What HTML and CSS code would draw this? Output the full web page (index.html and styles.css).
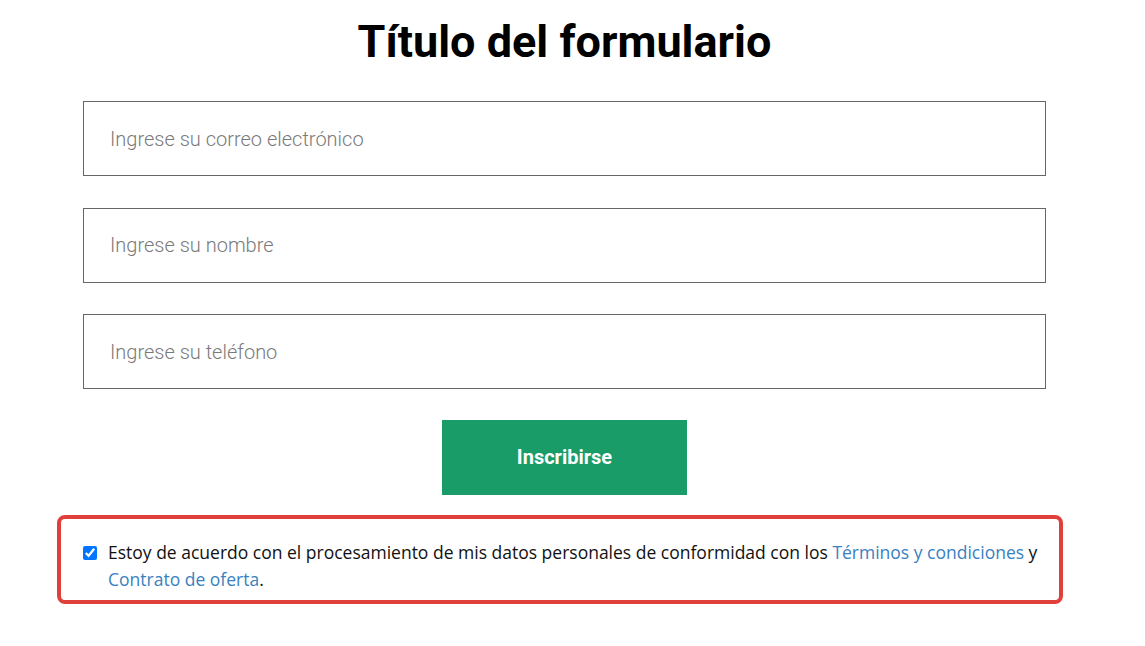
FILE: index.html
```html
<!DOCTYPE html>
<html lang="es">
<head>
    <meta charset="UTF-8">
    <meta name="viewport" content="width=device-width, initial-scale=1.0">
    <title>Formulario</title>
    <link rel="stylesheet" href="styles.css">
</head>
<body>
    <div class="page">
        <h1 class="form-title">Título del formulario</h1>

        <form class="signup-form">
            <input type="email" class="field" placeholder="Ingrese su correo electrónico">
            <input type="text" class="field" placeholder="Ingrese su nombre">
            <input type="tel" class="field" placeholder="Ingrese su teléfono">
            <button type="submit" class="submit-btn">Inscribirse</button>
        </form>

        <label class="consent">
            <input type="checkbox" class="consent-check" checked>
            <span class="consent-text">Estoy de acuerdo con el procesamiento de mis datos personales de conformidad con los <a href="#">Términos y condiciones</a> y <a href="#">Contrato de oferta</a>.</span>
        </label>
    </div>
</body>
</html>
```

FILE: styles.css
```css
* {
    box-sizing: border-box;
    margin: 0;
    padding: 0;
}

body {
    background: #fff;
    font-family: Roboto, "Liberation Sans", sans-serif;
    padding-right: 16px;
}

.page {
    width: 1006px;
    margin: 0 auto;
    padding-top: 14px;
    display: flex;
    flex-direction: column;
    align-items: center;
}

.form-title {
    font-size: 45px;
    font-weight: 700;
    color: #000;
    line-height: 56px;
    margin-bottom: 31px;
}

.signup-form {
    width: 963px;
    display: flex;
    flex-direction: column;
    align-items: center;
    gap: 31.5px;
}

.field {
    width: 100%;
    height: 75px;
    border: 1px solid #666;
    padding: 0 26px;
    font-family: Roboto, sans-serif;
    font-weight: 300;
    font-size: 20px;
    color: #333;
    outline: none;
}

.field::placeholder {
    color: #7a7a7a;
}

.submit-btn {
    width: 245px;
    height: 75px;
    margin-top: -1px;
    background: #1a9c68;
    color: #fff;
    border: none;
    font-family: Roboto, sans-serif;
    font-weight: 700;
    font-size: 20px;
    cursor: pointer;
}

.consent {
    width: 1006px;
    margin-top: 20px;
    margin-left: -9px;
    border: 4px solid #e0403a;
    border-radius: 8px;
    padding: 20px 19px 7px 22px;
    display: flex;
    align-items: flex-start;
    gap: 11px;
    font-family: "Open Sans", sans-serif;
    font-size: 17.5px;
    line-height: 27px;
    color: #111;
}

.consent-check {
    width: 14px;
    height: 14px;
    margin-top: 7px;
    flex-shrink: 0;
}

.consent a {
    color: #3a7fc0;
    text-decoration: none;
}
```
